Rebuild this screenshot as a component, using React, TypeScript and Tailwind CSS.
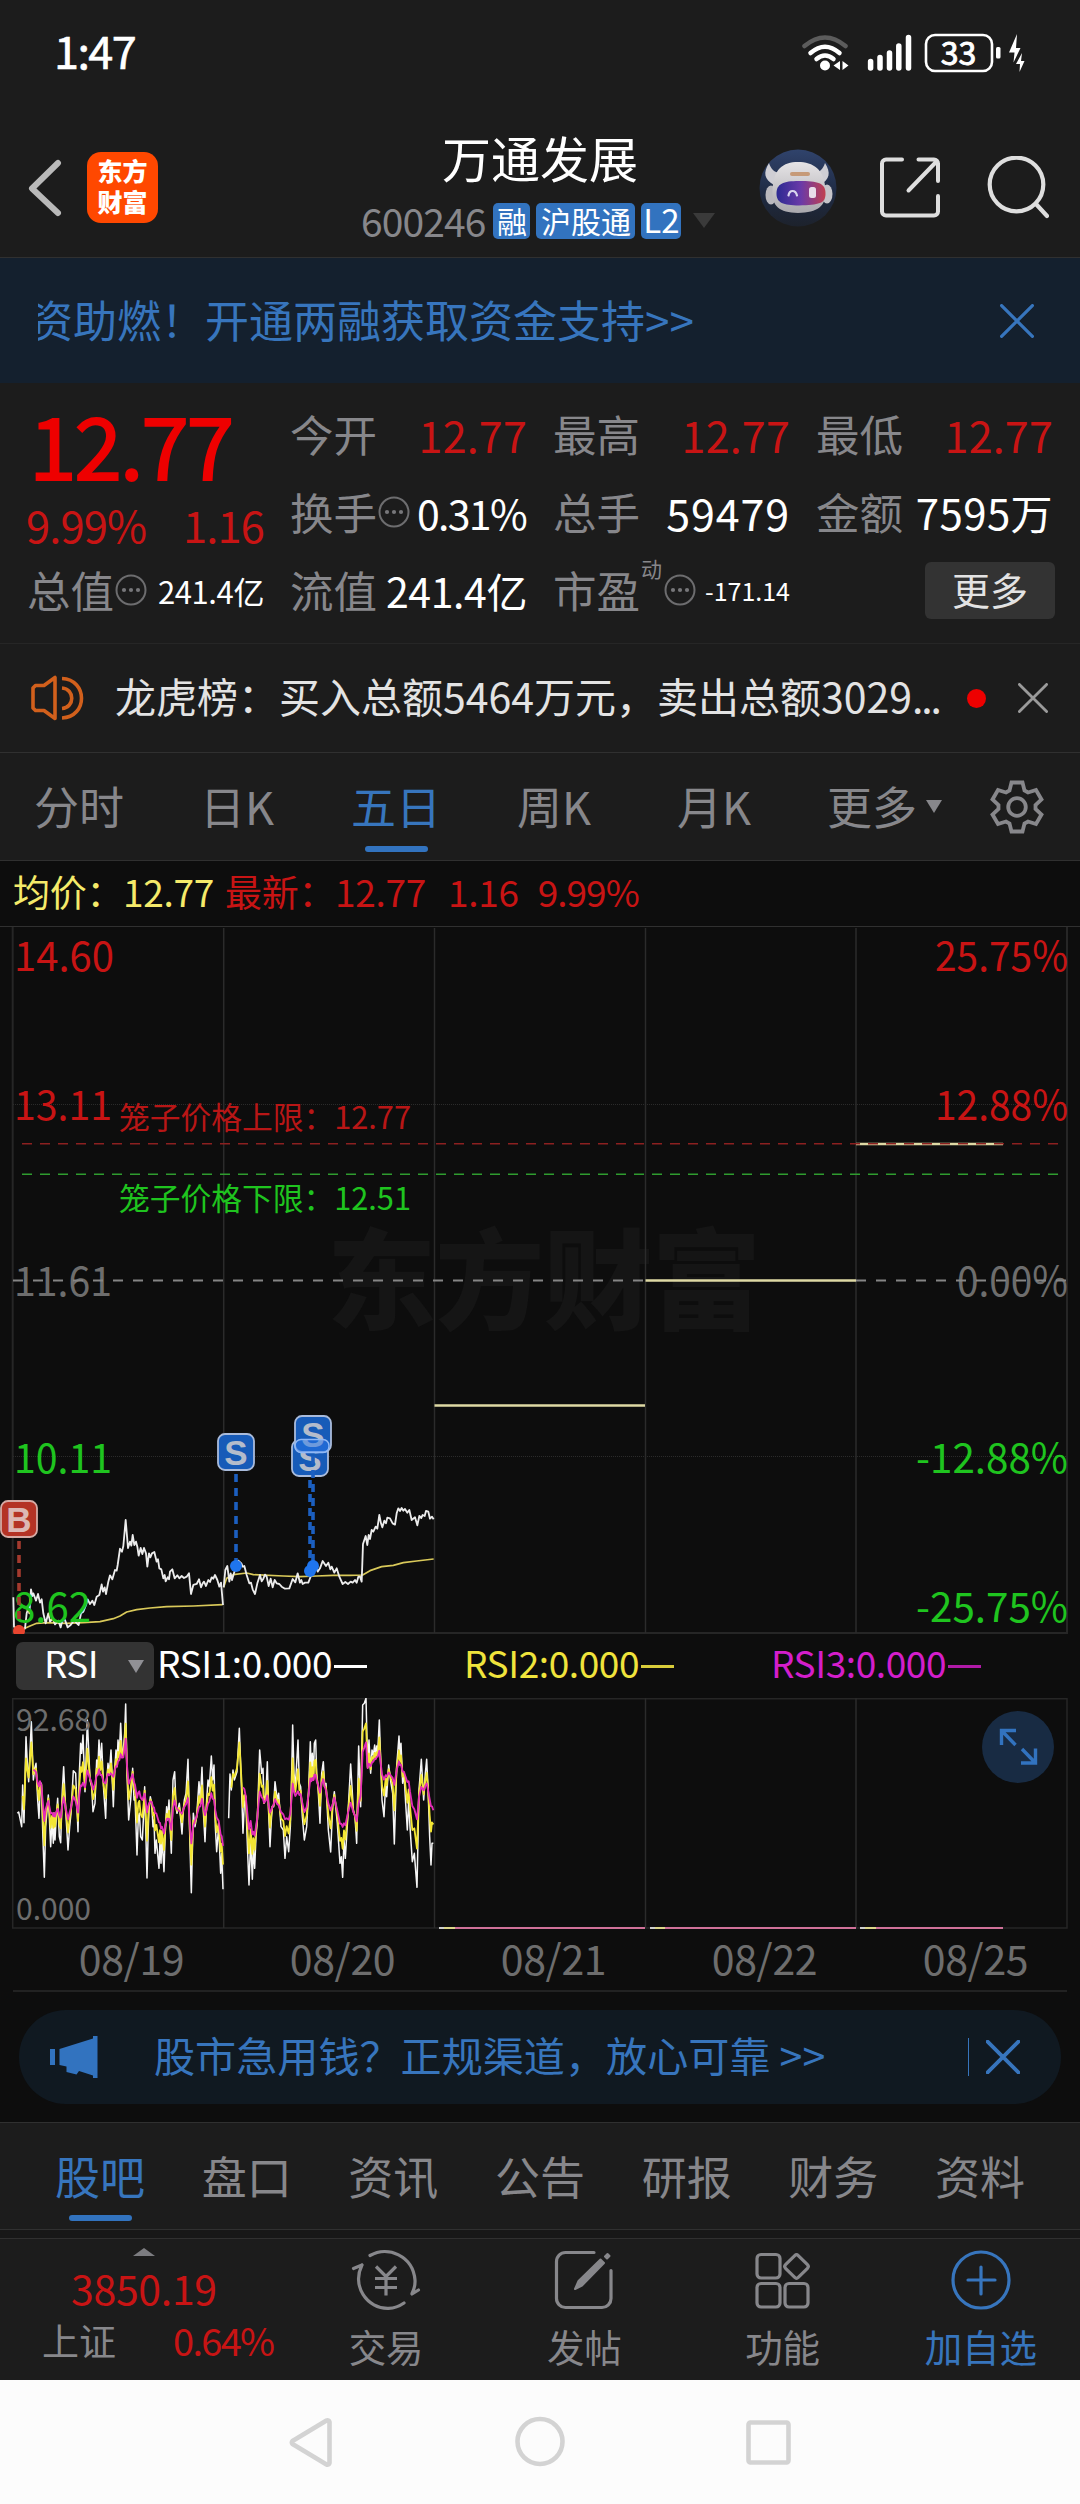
import type { ReactNode } from "react";
import { clsx } from "clsx";

type Point = [number, number];

const SANS = "font-['Noto_Sans_CJK_SC',sans-serif]";

function pairs(raw: string): Point[] {
  return raw
    .trim()
    .split(/\s+/)
    .map((p) => p.split(",").map(Number) as Point);
}

function at(points: Point[], x: number) {
  const next = points.findIndex((p) => p[0] >= x);
  if (next === -1) return points[points.length - 1][1];
  if (next === 0) return points[0][1];
  const [x0, y0] = points[next - 1];
  const [x1, y1] = points[next];
  return y0 + ((y1 - y0) * (x - x0)) / (x1 - x0);
}

function toPath(points: Point[]) {
  return points.map(([x, y]) => `${x},${y}`).join(" ");
}

// Series are sampled at a third of a pixel, relative to the top of their block.
const PRICE_DAYS = [
  "40,1252 42,1340 57,1355 75,1345 80,1300 85,1285 88,1300 93,1228 97,1248 100,1240 108,1262 114,1242 120,1268 125,1258 130,1300 137,1330 145,1300 150,1325 158,1315 165,1333 175,1322 182,1342 187,1322 195,1320 203,1342 212,1335 222,1322 236,1335 243,1300 250,1295 258,1275 263,1258 270,1272 277,1262 283,1275 290,1250 298,1245 305,1213 309,1235 314,1222 318,1242 325,1205 330,1186 337,1198 345,1170 350,1172 353,1155 360,1106 366,1115 370,1098 377,1020 384,1104 390,1085 394,1097 398,1065 403,1095 408,1085 412,1100 416,1127 422,1104 427,1122 432,1104 438,1120 442,1160 447,1120 451,1132 456,1120 463,1116 470,1145 474,1138 478,1165 484,1168 490,1195 494,1185 497,1204 503,1192 507,1198 510,1175 517,1168 524,1195 532,1186 538,1195 545,1188 552,1194 560,1190 567,1180 573,1242 580,1215 590,1212 597,1198 603,1222 608,1210 612,1205 618,1218 625,1200 630,1206 635,1192 640,1196 645,1185 652,1200 658,1220 663,1208 669,1275",
  "671,1222 676,1170 682,1158 688,1205 692,1180 696,1200 700,1186 708,1160 715,1142 724,1150 728,1160 733,1158 740,1185 748,1210 753,1208 758,1228 765,1242 772,1210 780,1185 785,1204 790,1196 795,1184 800,1190 806,1218 812,1196 818,1222 824,1200 830,1210 838,1212 845,1220 855,1226 868,1225 878,1197 886,1207 893,1180 900,1208 904,1200 908,1212 915,1208 925,1208 932,1190 940,1175 948,1150 953,1175 960,1165 968,1143 978,1158 985,1148 991,1168 995,1160 1003,1178 1010,1165 1018,1190 1028,1212 1036,1206 1044,1212 1052,1205 1058,1208 1065,1200 1070,1208 1075,1190 1080,1190 1085,1205 1087,1150 1089,1092 1097,1068 1102,1095 1106,1065 1110,1077 1115,1050 1120,1055 1127,1040 1132,1046 1138,1005 1143,1030 1147,1042 1153,1022 1158,1030 1162,1013 1170,1015 1178,1030 1185,1034 1190,1000 1195,985 1200,993 1205,984 1210,992 1215,987 1222,998 1228,990 1235,1020 1245,1012 1252,1036 1258,1008 1264,1014 1268,1005 1274,1008 1278,993 1285,995 1290,1016 1296,1010 1301,1018",
];

const AVERAGE_DAYS = [
  "57,1355 75,1345 90,1338 110,1330 140,1328 200,1330 250,1328 300,1325 340,1316 360,1308 380,1296 410,1289 450,1284 500,1280 580,1278 668,1274",
  "671,1222 680,1195 700,1184 740,1179 760,1184 850,1188 900,1190 950,1188 1000,1186 1050,1186 1088,1185 1110,1172 1145,1160 1180,1156 1210,1148 1250,1143 1301,1137",
];

const RSI_DAYS = [
  {
    fast: "52,520 56,516 65,560 68,435 72,548 78,290 82,370 86,425 94,245 100,420 104,385 108,370 113,480 117,535 120,450 124,430 129,600 133,712 137,560 145,465 152,620 156,540 160,610 162,520 165,600 169,530 173,475 178,590 182,608 187,450 191,380 197,510 204,630 209,560 213,520 220,392 227,400 234,575 238,400 242,310 245,340 249,285 255,455 262,240 270,420 275,440 279,515 285,490 290,360 293,400 297,300 301,370 305,310 311,450 317,535 320,430 324,370 328,400 333,330 340,500 344,390 348,330 351,380 354,300 358,340 362,250 366,340 370,330 374,280 377,192 381,400 386,540 392,480 398,385 402,480 405,470 411,645 415,530 418,520 422,590 427,600 431,520 434,440 441,714 445,560 447,510 451,470 455,490 459,560 462,540 465,640 469,600 477,685 480,600 483,670 486,590 492,695 496,570 500,500 503,540 507,480 514,640 519,420 524,395 528,500 531,520 538,490 546,582 550,510 553,480 558,460 564,358 570,620 574,758 580,520 585,560 590,530 597,425 601,480 606,382 611,530 615,605 620,480 624,420 628,440 634,348 638,420 642,375 646,560 650,635 656,560 662,700 665,640 669,748",
    slow: "52,520 68,500 78,420 86,400 94,370 100,385 108,400 115,430 120,420 125,440 133,520 139,490 145,485 155,515 165,520 172,510 182,522 191,485 204,525 220,480 234,510 240,455 247,450 255,440 265,400 272,420 279,440 288,415 297,400 303,415 310,425 325,405 333,410 348,385 362,355 370,355 377,310 384,420 390,410 398,405 411,450 418,445 425,465 433,460 441,490 455,485 475,520 482,550 492,565 503,535 514,560 522,490 540,520 564,490 574,590 585,540 606,490 617,520 634,475 645,500 656,540 669,600",
  },
  {
    fast: "686,535 690,402 694,450 699,390 703,420 711,395 718,265 724,430 729,580 733,490 737,470 743,640 747,735 752,600 757,718 760,620 764,685 768,590 772,540 779,330 785,400 789,385 792,490 798,460 802,365 806,520 810,620 814,540 817,500 821,500 825,425 832,480 836,460 843,560 850,570 855,655 860,590 866,635 871,560 875,400 878,255 882,400 886,440 894,300 898,430 902,440 907,530 913,600 920,560 926,450 931,305 934,400 937,340 940,420 943,310 947,300 950,400 954,440 960,550 965,400 970,365 974,440 978,430 985,570 992,636 998,500 1003,455 1012,550 1020,670 1024,650 1028,712 1032,600 1036,655 1044,520 1052,372 1060,510 1065,530 1070,610 1076,318 1082,500 1088,195 1093,190 1098,175 1103,380 1107,300 1112,400 1116,330 1120,345 1124,315 1127,350 1130,318 1133,340 1138,240 1146,480 1152,530 1157,430 1160,470 1166,375 1173,430 1178,460 1183,612 1190,380 1197,288 1200,350 1203,310 1208,430 1212,400 1217,490 1222,570 1226,480 1230,560 1237,665 1243,640 1251,742 1257,450 1264,358 1271,480 1276,400 1280,358 1284,440 1289,590 1293,675 1296,610 1300,610",
    slow: "686,470 700,410 718,350 726,410 735,450 741,500 747,545 752,535 757,565 765,575 772,530 778,470 790,490 802,480 812,510 825,485 843,510 860,527 870,525 878,455 890,480 902,465 913,505 922,490 931,430 945,415 960,445 970,425 985,480 995,500 1003,475 1020,535 1035,545 1050,500 1070,535 1080,500 1088,355 1098,325 1103,385 1118,370 1138,345 1148,405 1165,400 1183,410 1197,375 1212,395 1225,410 1235,470 1251,510 1260,455 1280,440 1290,465 1300,497",
  },
];

const PERIODS = ["分时", "日K", "五日", "周K", "月K"];
const SECTIONS = ["股吧", "盘口", "资讯", "公告", "研报", "财务", "资料"];
const DATES = ["08/19", "08/20", "08/21", "08/22", "08/25"];
const GRID_X = [223.7, 434.5, 645.5, 856];

function Close({ size, className, width = 3 }: { size: number; className?: string; width?: number }) {
  return (
    <svg width={size} height={size} viewBox="0 0 32 32" className={className} fill="none" stroke="currentColor" strokeWidth={width} strokeLinecap="round">
      <path d="M1.5 1.5 30.5 30.5M30.5 1.5 1.5 30.5" />
    </svg>
  );
}

function Dots({ className }: { className?: string }) {
  return (
    <svg width="32" height="32" viewBox="0 0 32 32" className={clsx("shrink-0", className)}>
      <circle cx="16" cy="16" r="14.5" fill="none" stroke="#6d6d6f" strokeWidth="2" />
      <circle cx="9" cy="16" r="2.1" fill="#77777a" />
      <circle cx="16" cy="16" r="2.1" fill="#77777a" />
      <circle cx="23" cy="16" r="2.1" fill="#77777a" />
    </svg>
  );
}

function StatusBar() {
  return (
    <div className="flex h-[105px] items-center justify-between pr-[54px] pl-[54px]">
      <span className="pb-[6px] text-[45px] leading-none tracking-[-1.6px] text-white [-webkit-text-stroke:0.6px_#fff]">1:47</span>
      <svg width="226" height="40" viewBox="800 32 226 40" fill="none">
        <path d="M804.5 45Q825 28 845.500 45" stroke="#5c5c5c" strokeWidth="4.500" strokeLinecap="round" />
        <path d="M810.500 52Q825 39.500 839.500 52" stroke="#fff" strokeWidth="4.500" strokeLinecap="round" />
        <path d="M816.500 58Q825 51 833.500 58" stroke="#fff" strokeWidth="4.500" strokeLinecap="round" />
        <circle cx="825" cy="64.500" r="5" fill="#fff" />
        <path d="M840 60v9l-6.500-4.500zM842.500 60v9l6-4.500z" fill="#fff" />
        <path d="M870.600 60.500V67M880 56.500V67M889.500 52V67M898.800 45V67M908.500 36.500V67" stroke="#fff" strokeWidth="5.500" strokeLinecap="round" />
        <rect x="926" y="34" width="66" height="36" rx="9" stroke="#fff" strokeWidth="2.600" />
        <text x="958.500" y="63.500" textAnchor="middle" fontSize="32" fill="#fff" stroke="#fff" strokeWidth="0.900">33</text>
        <rect x="996" y="46" width="4.500" height="11.500" rx="1.500" fill="#fff" />
        <path d="M1017 33l-8 18.500h5.500l-1 10 7-14.500h-4.500zM1022 52l-6 11h4l-.5 8 5-11h-3.500z" fill="#fff" />
      </svg>
    </div>
  );
}

function Badge({ children, className }: { children: ReactNode; className?: string }) {
  return (
    <span className={clsx("flex h-9 items-center justify-center rounded-[5px] bg-[#3273bf] pb-[2px] leading-none text-white", className)}>
      {children}
    </span>
  );
}

function Mascot() {
  return (
    <svg width="78" height="78" viewBox="0 0 78 78">
      <defs>
        <linearGradient id="sky" x1="0" y1="0" x2="0" y2="1">
          <stop offset="0" stopColor="#30436c" />
          <stop offset="0.55" stopColor="#1f2b44" />
          <stop offset="1" stopColor="#1d222c" />
        </linearGradient>
        <linearGradient id="shell" x1="0" y1="0" x2="0" y2="1">
          <stop offset="0" stopColor="#e6e4e6" />
          <stop offset="1" stopColor="#a9a8ad" />
        </linearGradient>
        <linearGradient id="visor" x1="0" y1="0" x2="1" y2="0">
          <stop offset="0" stopColor="#2c2a92" />
          <stop offset="0.5" stopColor="#6a3aa8" />
          <stop offset="1" stopColor="#c2404f" />
        </linearGradient>
      </defs>
      <circle cx="39" cy="39" r="38.500" fill="url(#sky)" />
      <path d="M10 14c-6 10-5 16 5 22l8-12c-8 0-11-4-13-10zM66 14c6 10 5 16-5 22l-8-12c8 0 11-4 13-10z" fill="#cfced4" />
      <ellipse cx="12" cy="46" rx="5.500" ry="9.500" fill="#b9b8be" />
      <ellipse cx="68" cy="45" rx="5.500" ry="9.500" fill="#c6c5ca" />
      <path d="M39 13C24 13 14 20 13.500 42 13 57 20 63.500 39 64c20-.5 28-7 27.500-22C66 20 54 13 39 13z" fill="url(#shell)" />
      <rect x="31" y="23" width="20" height="4" rx="2" fill="#c69a78" />
      <path d="M40 32c19 0 26.500 2 26.500 12.500S60 55.500 40 56.500C24 56 17.500 54 17.500 44.500S24 32 40 32z" fill="url(#visor)" />
      <path d="M29.500 46.500c1-6 7-6 8.500 0" fill="none" stroke="#d9d6ee" strokeWidth="2.200" strokeLinecap="round" />
      <rect x="50" y="38" width="7" height="11" rx="2.500" fill="#e9dcea" />
    </svg>
  );
}

function Header() {
  return (
    <header className="flex h-[153px] items-center border-b border-[#303030] pl-7">
      <svg width="34" height="58" viewBox="0 0 34 58" fill="none" stroke="#b9b9b9" strokeWidth="6" strokeLinecap="round" strokeLinejoin="round" className="mt-[13px]">
        <path d="M30 4 4 29.500 30 54" />
      </svg>
      <div className="mt-[13px] ml-[25px] flex h-[71px] w-[71px] flex-col items-center justify-center rounded-[14px] bg-[#ff4800] pb-[3px] text-[25px] leading-[31px] font-black text-white">
        <span>东方</span>
        <span>财富</span>
      </div>
      <div className="ml-[203px] flex w-[355px] flex-col">
        <span className="pl-[81px] text-[49px] leading-[62px] text-white">万通发展</span>
        <div className="mt-[14px] -mb-[3px] flex items-center">
          <span className="pb-px text-[39px] leading-9 tracking-[-0.9px] text-[#87878b]">600246</span>
          <Badge className="ml-[8px] w-[37px] text-[30px]">融</Badge>
          <Badge className="ml-1.5 w-[99px] text-[30px]">沪股通</Badge>
          <Badge className="ml-1.5 w-10 text-[33px]">L2</Badge>
          <svg width="22" height="15" viewBox="0 0 22 15" className="ml-[12px]">
            <path d="M0 0h22L11 15z" fill="#3a3a3a" />
          </svg>
        </div>
      </div>
      <div className="mt-[13px] ml-[43px] flex items-center">
        <Mascot />
        <svg width="60" height="61" viewBox="0 0 60 61" fill="none" stroke="#dedede" strokeWidth="4" strokeLinecap="round" strokeLinejoin="round" className="ml-[43px]">
          <path d="M22 2.500H6A4 4 0 0 0 2 6.500v48a4 4 0 0 0 4 4h48a4 4 0 0 0 4-4V39M38.500 2.500H54a4 4 0 0 1 4 4V24M57 4 28.500 33.500" />
        </svg>
        <svg width="62" height="64" viewBox="0 0 62 64" fill="none" stroke="#dedede" strokeWidth="4.200" strokeLinecap="round" className="ml-[47px]">
          <circle cx="29.500" cy="28.500" r="26.800" />
          <path d="M49 48l11 12" />
        </svg>
      </div>
    </header>
  );
}

function Banner() {
  return (
    <div className="flex h-[125px] items-center bg-[#14202e] pr-[46px] pl-[38px] text-[#3775bd]">
      <div className="flex-1 overflow-hidden">
        <p className="-ml-[9px] pb-[3px] text-[44px] leading-[64px] whitespace-nowrap">资助燃！开通两融获取资金支持&gt;&gt;</p>
      </div>
      <Close size={34} />
    </div>
  );
}

function Stat({ label, value, valueClass, children }: { label: string; value?: string; valueClass?: string; children?: ReactNode }) {
  return (
    <div className="flex h-[78px] items-center whitespace-nowrap">
      <span className="shrink-0 text-[43.500px] leading-none text-[#87878b]">{label}</span>
      {children}
      {value && <span className={clsx("ml-auto", valueClass)}>{value}</span>}
    </div>
  );
}

const RED_VALUE = "text-[43px] leading-none tracking-[0.2px] text-[#c81414]";

function Quote() {
  return (
    <section className="grid h-[261px] grid-cols-4 grid-rows-[78px_78px_78px] gap-x-[26px] border-b border-[#262626] px-[27px] pt-[12px]">
      <div className="row-span-2 flex flex-col">
        <span className="pl-[2px] text-[86px] leading-[96px] tracking-[-2.4px] text-[#ee0000] [-webkit-text-stroke:1.8px_#ee0000]">12.77</span>
        <div className="-ml-px mt-[8px] flex justify-between text-[43.500px] leading-[52px] tracking-[-0.9px] text-[#c81414]">
          <span>9.99%</span>
          <span>1.16</span>
        </div>
      </div>
      <Stat label="今开" value="12.77" valueClass={RED_VALUE} />
      <Stat label="最高" value="12.77" valueClass={RED_VALUE} />
      <Stat label="最低" value="12.77" valueClass={RED_VALUE} />
      <Stat label="换手" value="0.31%" valueClass="mr-px text-[41px] leading-none tracking-[-1.7px] text-white">
        <Dots className="ml-px" />
      </Stat>
      <Stat label="总手" value="59479" valueClass="text-[43px] leading-none tracking-[0.9px] text-white" />
      <Stat label="金额" value="7595万" valueClass="text-[42px] leading-none tracking-[0.4px] text-white" />
      <Stat label="总值" value="241.4亿" valueClass="text-[31px] leading-none tracking-[-0.4px] text-white">
        <Dots className="ml-px" />
      </Stat>
      <Stat label="流值" value="241.4亿" valueClass="text-[41px] leading-none tracking-[-0.4px] text-white" />
      <Stat label="市盈" value="-171.14" valueClass="text-[25px] leading-none text-white">
        <sup className="-mr-px ml-px self-start pt-[17px] text-[21px] leading-none text-[#87878b]">动</sup>
        <Dots className="ml-[3px]" />
      </Stat>
      <div className="flex h-[78px] items-center justify-end">
        <button className="-mr-[2px] h-[57px] w-[130px] rounded-[6px] bg-[#333333] pb-[3px] text-[38px] leading-none text-[#e3e3e3]">更多</button>
      </div>
    </section>
  );
}

function NewsTicker() {
  return (
    <div className="flex h-[109px] items-center border-b border-[#303030] pr-8 pl-[31px]">
      <svg width="53" height="46" viewBox="0 0 53 46" fill="none" stroke="#d2601c" strokeWidth="3.600" strokeLinejoin="round">
        <path d="M24 2.500v41L13 35.500H4.500L2 33V13l2.500-2.500H13zM31 3.500c26 1 26 38.500 0 39.500M31 13c13 1 13 19.500 0 20.500" />
      </svg>
      <p className="-mt-[7px] ml-[31px] w-[831px] text-[41px] leading-[56px] whitespace-nowrap text-[#e3e3e3]">
        龙虎榜：买入总额5464万元，卖出总额3029<span className="tracking-[-2.200px]">...</span>
      </p>
      <span className="ml-[21px] size-[19px] rounded-full bg-[#ee0000]" />
      <Close size={30} className="ml-auto text-[#9a9a9a]" />
    </div>
  );
}

function PeriodTabs() {
  return (
    <nav className="flex h-[108px] items-center border-b border-[#303030] pl-[34px] text-[45px] leading-[60px] text-[#87878b]">
      {PERIODS.map((period, i) => (
        <span
          key={period}
          className={clsx(
            "relative -mt-[2px] shrink-0",
            ["w-[166px]", "w-[151px]", "w-[166px]", "w-[160px]", "w-[150px]"][i],
            period === "五日" && "text-[#3775bd]",
          )}
        >
          {period}
          {period === "五日" && <i className="absolute top-[70px] left-[14px] h-1.5 w-[63px] rounded-full bg-[#3273bf]" />}
        </span>
      ))}
      <span className="-mt-[2px] shrink-0">更多</span>
      <svg width="16" height="13" viewBox="0 0 16 13" className="ml-[9px] shrink-0">
        <path d="M0 0h16L8 13z" fill="#87878b" />
      </svg>
      <svg width="54" height="54" viewBox="-27 -27 54 54" fill="none" stroke="#87878b" strokeWidth="3.800" className="ml-12 shrink-0">
        <path d="M-5.500-24.500H5.500L7.500-16.500 11-14.500 19-17 24.500-7.500 18.500-2V2L24.500 7.500 19 17 11 14.500 7.500 16.500 5.500 24.500H-5.500L-7.500 16.500-11 14.500-19 17-24.500 7.500-18.500 2V-2L-24.500-7.500-19-17-11-14.500-7.500-16.500z" />
        <circle r="8.800" />
      </svg>
    </nav>
  );
}

function Tick({ x, y, w, end, fill, size = 41, children }: { x: number; y: number; w: number; end?: boolean; fill: string; size?: number; children: string }) {
  return (
    <text x={x} y={y} fontSize={size} fill={fill} textAnchor={end ? "end" : "start"} textLength={w} lengthAdjust="spacingAndGlyphs">
      {children}
    </text>
  );
}

function Marker({ x, y, to, label }: { x: number; y: number; to: number; label: "B" | "S" }) {
  const buy = label === "B";
  return (
    <g>
      <path d={`M${x} ${y + 41}V${to}`} stroke={buy ? "#a33a2e" : "#1c5fc0"} strokeWidth="3.600" strokeDasharray="8 6" />
      <circle cx={x} cy={to} r="6" fill={buy ? "#e8452f" : "#1f75ee"} />
      <rect x={x - 18} y={y + 1} width="36" height="36" rx="7" fill={buy ? "#b43325" : "#175bb8"} stroke={buy ? "#d6aaa4" : "#a9bbdb"} strokeWidth="1.800" />
      <text x={x} y={y + 31.500} textAnchor="middle" fontSize="35" fontWeight="700" fontFamily="Liberation Sans, sans-serif" fill={buy ? "#dcb8b4" : "#b4bccb"}>
        {label}
      </text>
    </g>
  );
}

function PriceChart() {
  return (
    <svg width="1080" height="707" viewBox="0 927 1080 707" className="block">
      <text x="327" y="1321" fontSize="109" fontWeight="900" fill="#151515" textLength="434">东方财富</text>
      <g stroke="#2b2b2b" strokeWidth="1.500" fill="none">
        <path d="M12.700 927V1633H1067V927" strokeWidth="2" stroke="#262626" />
        {GRID_X.map((x) => (
          <path key={x} d={`M${x} 928V1633`} />
        ))}
        <path d="M13 1104.500H1067M13 1456.500H1067" strokeWidth="1" strokeDasharray="1 1" />
      </g>

      <Tick x={14} y={971} w={100} fill="#c81414">14.60</Tick>
      <Tick x={14} y={1120} w={98} fill="#c81414">13.11</Tick>
      <Tick x={14} y={1296} w={98} fill="#6d6d6d">11.61</Tick>
      <Tick x={14} y={1473} w={98} fill="#1fc41f">10.11</Tick>
      <Tick x={1068} y={971} w={133} end fill="#c81414">25.75%</Tick>
      <Tick x={1068} y={1120} w={133} end fill="#c81414">12.88%</Tick>
      <Tick x={1068} y={1296} w={111} end fill="#6d6d6d">0.00%</Tick>
      <Tick x={1068} y={1473} w={152} end fill="#1fc41f">-12.88%</Tick>
      <Tick x={1068} y={1622} w={152} end fill="#1fc41f">-25.75%</Tick>

      <Tick x={119} y={1129} w={292} size={31} fill="#b81616">笼子价格上限：12.77</Tick>
      <Tick x={119} y={1210} w={292} size={31} fill="#1fc41f">笼子价格下限：12.51</Tick>

      <path d="M434.500 1405.500H645M645.500 1280.500H856M856 1144H1003" stroke="#ded9a4" strokeWidth="2.600" />
      <path d="M22 1143.700H1059" stroke="#8c2020" strokeWidth="1.400" strokeDasharray="10 8" />
      <path d="M22 1174.300H1059" stroke="#2f9c2f" strokeWidth="1.400" strokeDasharray="10 8" />
      <path d="M13 1280.500H645M856 1280.500H1067" stroke="#858585" strokeWidth="1.800" strokeDasharray="10 10" />

      <g transform="translate(0 1180) scale(0.33333)" fill="none" strokeLinejoin="round">
        {AVERAGE_DAYS.map((day) => (
          <polyline key={day} points={day} stroke="#d9c95a" strokeWidth="5" />
        ))}
        {PRICE_DAYS.map((day) => (
          <polyline key={day} points={day} stroke="#ececec" strokeWidth="5.500" />
        ))}
      </g>
      <Tick x={13} y={1622} w={78} fill="#1fc41f">8.62</Tick>

      <Marker x={19} y={1500} to={1631} label="B" />
      <Marker x={236} y={1433} to={1566} label="S" />
      <Marker x={310} y={1439} to={1571} label="S" />
      <rect x="294.500" y="1439.500" width="34.500" height="13" rx="6" fill="#2878ee" />
      <Marker x={313} y={1415} to={1566} label="S" />
      <rect x="295" y="1439.500" width="34" height="13" rx="6" fill="#2878ee" fillOpacity="0.5" stroke="#8fb8f5" strokeWidth="1.500" />
    </svg>
  );
}

function RsiChart() {
  return (
    <div className="relative">
      <svg width="1080" height="232" viewBox="0 1698 1080 232" className="block">
        <g stroke="#262626" strokeWidth="1.500" fill="none">
          <path d="M12.700 1698.700H1067V1928H12.700z" />
          {GRID_X.map((x) => (
            <path key={x} d={`M${x} 1698V1928`} stroke="#2b2b2b" />
          ))}
        </g>
        <g transform="translate(0 1640) scale(0.33333)" fill="none" strokeLinejoin="round">
          {RSI_DAYS.map((day, i) => {
            const fast = pairs(day.fast);
            const slow = pairs(day.slow);
            const mid = fast.slice(i === 0 ? 3 : 2).map(([x, y]) => [x, y * 0.5 + at(slow, x) * 0.5] as Point);
            const tail = fast
              .filter(([x]) => x >= slow[i === 0 ? 5 : 3][0])
              .map(([x, y]) => [x, y * 0.12 + at(slow, x) * 0.88] as Point);
            return (
              <g key={day.fast}>
                <polyline points={toPath(fast)} stroke="#f6f6f6" strokeWidth="4.500" />
                <polyline points={toPath(mid)} stroke="#f3e634" strokeWidth="5.500" />
                <polyline points={toPath(tail)} stroke="#e42cb8" strokeWidth="5.500" />
              </g>
            );
          })}
        </g>
        <g strokeWidth="2">
          <path d="M439 1928H645M650 1928H856M860 1928H1003" stroke="#cdcdcd" />
          <path d="M444 1928H645M655 1928H856M865 1928H1003" stroke="#ddd68a" />
          <path d="M455 1928H645M665 1928H856M876 1928H1003" stroke="#cf7199" />
        </g>
        <Tick x={16} y={1731} w={92} size={31} fill="#6d6d6d">92.680</Tick>
        <Tick x={16} y={1920} w={75} size={31} fill="#6d6d6d">0.000</Tick>
      </svg>
      <button className="absolute top-[13px] left-[982px] size-18 rounded-full bg-[#182b43]">
        <svg width="72" height="72" viewBox="0 0 72 72" fill="none" stroke="#3273bf" strokeWidth="3.400">
          <path d="M19.500 34V19.500H34M20 20l13.500 14M53.500 37.500V52H39M53 51.500 40 38" />
        </svg>
      </button>
    </div>
  );
}

function RsiLegend() {
  return (
    <div className="flex h-16 items-center text-[37px] leading-none tracking-[-0.4px]">
      <div className="ml-4 flex h-12 w-[138px] items-center rounded-[7px] bg-[#333333] pl-[28px] text-white">
        <span className="pb-[7px] tracking-[-0.6px]">RSI</span>
        <svg width="16" height="13" viewBox="0 0 16 13" className="mr-[10px] ml-auto">
          <path d="M0 0h16L8 13z" fill="#909095" />
        </svg>
      </div>
      <div className="ml-[3px] flex w-[307px] items-center text-white">
        <span className="pb-[7px]">RSI1:0.000</span>
        <i className="ml-0.5 h-[3px] w-[33px] bg-white" />
      </div>
      <div className="flex w-[307px] items-center text-[#f0e43c]">
        <span className="pb-[7px]">RSI2:0.000</span>
        <i className="ml-0.5 h-[3px] w-[33px] bg-[#d8cc3a]" />
      </div>
      <div className="flex items-center text-[#d41ecb]">
        <span className="pb-[7px]">RSI3:0.000</span>
        <i className="ml-0.5 h-[3px] w-[33px] bg-[#b01aa8]" />
      </div>
    </div>
  );
}

function Promo() {
  return (
    <div className="mt-[18px] mr-[19px] ml-[19px] flex h-[94px] items-center rounded-full bg-[#101921] pr-[41px] pl-[31px] text-[#3775bd]">
      <svg width="48" height="42" viewBox="0 0 48 42" fill="#3273bf" className="shrink-0">
        <path d="M0 13h5v16H0zM9.500 13 43 2.500V0h4.500v42H43v-2.500L29 35l-2.500 3.500-10-2.500v-5.500l-7-1.500z" />
      </svg>
      <p className="-mt-[6px] ml-[56px] text-[41.100px] leading-[56px] whitespace-nowrap">股市急用钱？正规渠道，放心可靠 &gt;&gt;</p>
      <i className="ml-auto h-[38px] w-px bg-[#3775bd]" />
      <Close size={34} width={3.600} className="ml-[17px]" />
    </div>
  );
}

function SectionTabs() {
  return (
    <nav className="flex h-[108px] items-center justify-between border-y border-[#303030] bg-[#1c1c1c] pr-[55px] pl-[55px] text-[45px] leading-[60px] text-[#87878b]">
      {SECTIONS.map((name, i) => (
        <span key={name} className={clsx("relative", i === 0 && "text-[#3775bd]")}>
          {name}
          {i === 0 && <i className="absolute top-[69px] left-[14px] h-1.5 w-[63px] rounded-full bg-[#3273bf]" />}
        </span>
      ))}
    </nav>
  );
}

function Action({ label, tone = "text-[#87878b]", children }: { label: string; tone?: string; children: ReactNode }) {
  return (
    <div className={clsx("flex flex-1 flex-col items-center pt-[9px]", tone)}>
      <svg width="70" height="64" viewBox="-35 -32 70 64" fill="none" stroke="currentColor" strokeWidth="3.200" strokeLinecap="round" strokeLinejoin="round">
        {children}
      </svg>
      <span className="mt-[9px] text-[37.500px] leading-[50px]">{label}</span>
    </div>
  );
}

function BottomBar() {
  return (
    <div className="flex h-[142px] border-t border-[#303030] bg-[#1c1c1c]">
      <div className="flex w-[287px] flex-col pt-[9px]">
        <svg width="22" height="8" viewBox="0 0 22 8" className="ml-[133px]">
          <path d="M11 0l11 8H0z" fill="#7c7c80" />
        </svg>
        <span className="mt-[6px] pl-[71px] text-[41px] leading-[50px] tracking-[-0.3px] text-[#c81414]">3850.19</span>
        <div className="mt-[3px] flex items-center pl-[42px] leading-[50px]">
          <span className="w-[131px] text-[37px] text-[#87878b]">上证</span>
          <span className="text-[38px] tracking-[-1.7px] text-[#c81414]">0.64%</span>
        </div>
      </div>
      <Action label="交易">
        <path d="M-16-24.500C2-35 27-24 29 0c.3 5-.7 9-3 13.500M26 14l6.500-4M18 23C-2 37-27 22-27.500-1c0-5 1.500-10 3.500-14M-32.500-11.500l8.500-3.500" />
        <path d="M-10-13.500 0-3.500 10-13.500M0-3.500V15.500M-11-1.500H11M-11 7.500H11" strokeLinecap="butt" />
      </Action>
      <Action label="发帖">
        <path d="M10-27.500H-18.500a9 9 0 0 0-9 9V18.500a9 9 0 0 0 9 9H18a9 9 0 0 0 9-9V-9.500" />
        <path d="M-9 9-5.500 1 16.500-20.500 20-17-2 5.500zM21-23.500l2.500-2.500 2 2-2.500 2.500z" fill="currentColor" strokeWidth="2" />
      </Action>
      <Action label="功能">
        <rect x="-26" y="-25.500" width="23" height="23.500" rx="4" />
        <rect x="-26" y="3.500" width="23" height="23.500" rx="4" />
        <rect x="2" y="3.500" width="23" height="23.500" rx="4" />
        <rect x="4.500" y="-22.500" width="18" height="18" rx="2.500" transform="rotate(45 13.500 -13.500)" />
      </Action>
      <Action label="加自选" tone="text-[#3775bd]">
        <circle r="28" />
        <path d="M-13 0H14M0-13V14" />
      </Action>
    </div>
  );
}

function SystemNav() {
  return (
    <div className="flex h-[124px] items-center justify-center bg-[#fcfcfc]">
      <svg width="520" height="56" viewBox="280 2414 520 56" fill="none" stroke="#d3d3d3" strokeWidth="4.600" strokeLinejoin="round">
        <path d="M326.500 2420.500a2 2 0 0 1 3 1.500V2463a2 2 0 0 1-3 1.500L292.500 2444a2 2 0 0 1 0-3z" />
        <circle cx="540" cy="2441.500" r="22.500" />
        <rect x="748.500" y="2422.500" width="40" height="40" rx="2" />
      </svg>
    </div>
  );
}

export default function App() {
  return (
    <main className={clsx("h-[2504px] w-[1080px] overflow-hidden bg-[#1c1c1c]", SANS)}>
      <StatusBar />
      <Header />
      <Banner />
      <Quote />
      <NewsTicker />
      <PeriodTabs />
      <div className="h-[1261px] bg-[#0d0d0d]">
        <div className="flex h-[66px] items-center border-b border-[#303030] pl-[13px] text-[37px] leading-none tracking-[-0.3px] whitespace-pre">
          <span className="w-[212px] pb-[4px] text-[#f5ea6a]">均价：12.77</span>
          <span className="pb-[4px] text-[#c81414]">最新：12.77</span>
          <span className="ml-[22px] pb-[4px] text-[#c81414]">1.16</span>
          <span className="ml-[19px] pb-[4px] tracking-[-1px] text-[#c81414]">9.99%</span>
        </div>
        <PriceChart />
        <RsiLegend />
        <RsiChart />
        <div className="mr-[13px] ml-[13px] flex h-[62px] border-b-2 border-[#222222] pl-[13px] text-[41px] leading-[54px] tracking-[-0.3px] text-[#6d6d6d]">
          {DATES.map((date) => (
            <span key={date} className="w-[211px] shrink-0 text-center">{date}</span>
          ))}
        </div>
        <Promo />
      </div>
      <SectionTabs />
      <div className="h-2 bg-[#181818]" />
      <BottomBar />
      <SystemNav />
    </main>
  );
}
